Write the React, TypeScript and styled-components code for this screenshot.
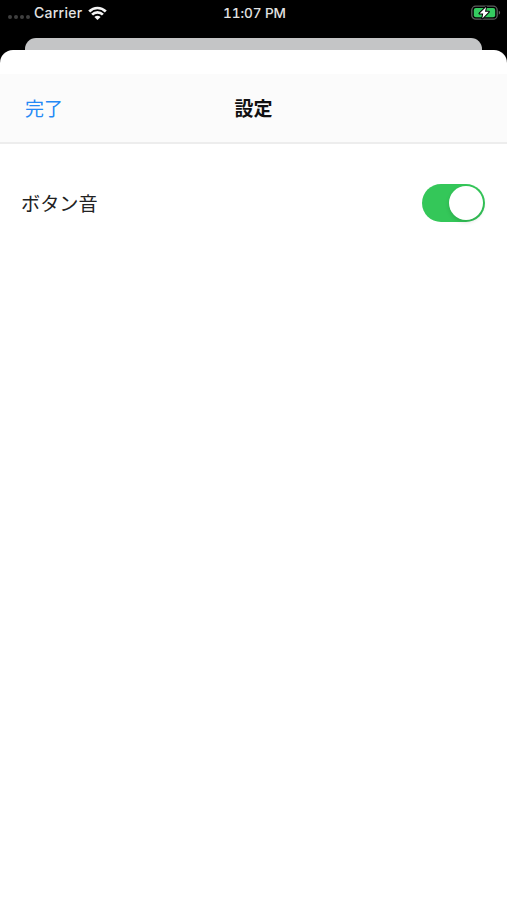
import React, { useState } from "react";
import styled, { createGlobalStyle } from "styled-components";

const GlobalStyle = createGlobalStyle`
  * { box-sizing: border-box; }
  body {
    margin: 0;
    background: #000;
    font-family: Inter, "Noto Sans CJK JP", sans-serif;
  }
`;

const Screen = styled.div`
  display: flex;
  flex-direction: column;
  width: 100%;
  height: 100vh;
  overflow: hidden;
  background: #000;
`;

const StatusBar = styled.header`
  display: grid;
  grid-template-columns: 1fr auto 1fr;
  align-items: center;
  height: 26px;
  padding: 0 6px 0 8px;
  margin-bottom: 12px;
  color: #e2e2e2;
  font-size: 14px;
  font-weight: 500;
  line-height: 26px;
`;

const Network = styled.div`
  display: flex;
  align-items: center;
`;

const SignalDots = styled.div`
  display: flex;
  gap: 2px;
  margin: 8px 4px 0 0;
`;

const Dot = styled.span`
  width: 4px;
  height: 4px;
  border-radius: 50%;
  background: #3f3f3f;
`;

const Carrier = styled.span`
  width: 49px;
  margin-right: 5px;
  letter-spacing: 0.25px;
`;

const Clock = styled.time`
  font-size: 13.6px;
  font-variant-numeric: tabular-nums;
  letter-spacing: -0.1px;
`;

const BatterySlot = styled.div`
  display: flex;
  justify-content: flex-end;
`;

const BackCard = styled.div`
  flex: none;
  height: 12px;
  margin: 0 25px;
  border-radius: 11px 11px 0 0;
  background: #c4c5c6;
`;

const Sheet = styled.main`
  flex: 1;
  padding-top: 24px;
  border-radius: 13px 13px 0 0;
  background: #fff;
`;

const NavigationBar = styled.nav`
  display: grid;
  grid-template-columns: 1fr auto 1fr;
  align-items: center;
  height: 70px;
  padding: 0 25px;
  border-bottom: 2px solid #ededed;
  background: #fbfbfb;
`;

const DoneButton = styled.button`
  justify-self: start;
  padding: 0;
  border: 0;
  background: none;
  color: #2489f5;
  font: 400 19px/28px "Noto Sans CJK JP", sans-serif;
`;

const Title = styled.h1`
  margin: 0;
  color: #111;
  font: 700 19px/28px "Noto Sans CJK JP", sans-serif;
`;

const SettingRow = styled.label`
  display: flex;
  align-items: center;
  justify-content: space-between;
  margin-top: 29px;
  height: 60px;
  padding: 0 22px 0 21px;
  color: #222;
  font: 400 19.2px/28px "Noto Sans CJK JP", sans-serif;
`;

const Switch = styled.button<{ $on: boolean }>`
  display: flex;
  justify-content: ${({ $on }) => ($on ? "flex-end" : "flex-start")};
  width: 63px;
  height: 38px;
  padding: 2px;
  border: 0;
  border-radius: 19px;
  background: ${({ $on }) => ($on ? "#34c759" : "#e9e9ea")};
`;

const Knob = styled.span`
  width: 34px;
  height: 34px;
  border-radius: 50%;
  background: #fff;
  box-shadow: 0 2px 4px rgba(0, 0, 0, 0.14);
`;

const WifiIcon = () => (
  <svg width="19" height="15" viewBox="0 0 19 15" fill="none">
    <path d="M1.2 5.5C5.9 .8 13.1 .8 17.8 5.5M4.1 8.6C7.1 5.6 11.9 5.6 14.9 8.6" stroke="#f4f4f4" strokeWidth="2.7" />
    <path d="M6.4 11C8.2 9.3 10.8 9.3 12.6 11L9.5 14.1Z" fill="#f4f4f4" />
  </svg>
);

const BatteryIcon = () => (
  <svg width="30" height="16" viewBox="0 0 30 16" fill="none">
    <rect x=".8" y="1.2" width="25.4" height="13" rx="4" stroke="#5c5f5d" strokeWidth="1.3" />
    <rect x="2.8" y="3.1" width="21.4" height="9.2" rx="2" fill="#35cb60" />
    <path d="M27.8 5.8C29.6 6.6 29.6 8.9 27.8 9.7Z" fill="#666" />
    <path d="M15.1 1.9L8.5 8.5H12.2L11.3 13.4L17.8 6.8H14Z" fill="#fff" stroke="#000" strokeWidth="2" strokeLinejoin="round" paintOrder="stroke" />
  </svg>
);

export default function App() {
  const [soundOn, setSoundOn] = useState(true);

  return (
    <>
      <GlobalStyle />
      <Screen>
        <StatusBar>
          <Network>
            <SignalDots><Dot /><Dot /><Dot /><Dot /></SignalDots>
            <Carrier>Carrier</Carrier>
            <WifiIcon />
          </Network>
          <Clock>11:07 PM</Clock>
          <BatterySlot><BatteryIcon /></BatterySlot>
        </StatusBar>
        <BackCard />
        <Sheet>
          <NavigationBar>
            <DoneButton>完了</DoneButton>
            <Title>設定</Title>
          </NavigationBar>
          <SettingRow>
            ボタン音
            <Switch
              type="button"
              role="switch"
              aria-checked={soundOn}
              $on={soundOn}
              onClick={() => setSoundOn(!soundOn)}
            >
              <Knob />
            </Switch>
          </SettingRow>
        </Sheet>
      </Screen>
    </>
  );
}
